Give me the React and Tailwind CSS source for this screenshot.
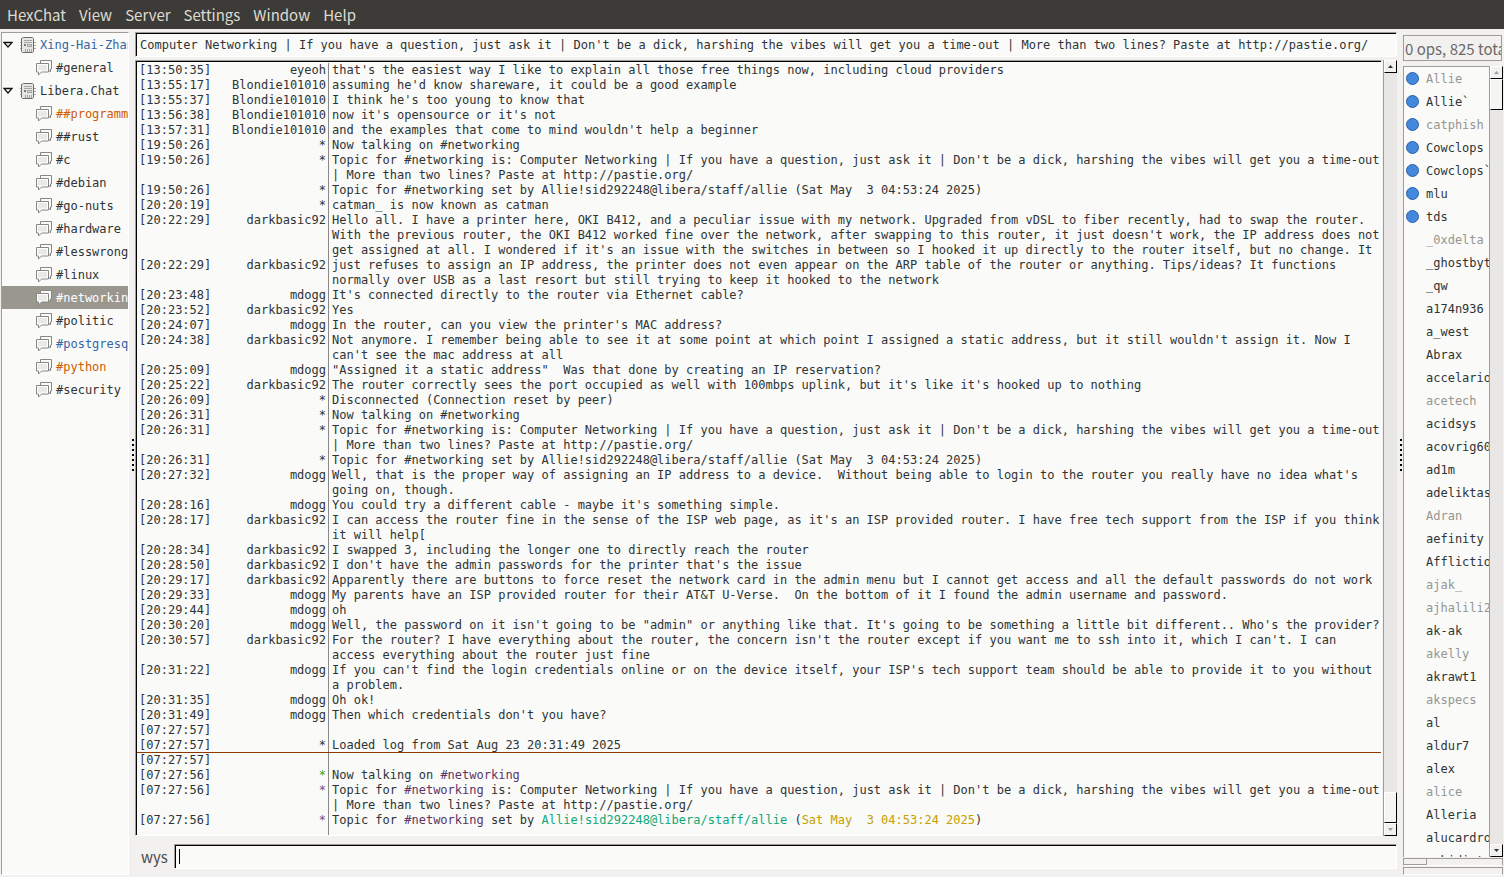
import clsx from "clsx";

const menus = ["HexChat", "View", "Server", "Settings", "Window", "Help"];

const networks = [
  { name: "Xing-Hai-Zhan", tone: "text-[#3465a4]", channels: [{ name: "#general" }] },
  {
    name: "Libera.Chat",
    channels: [
      { name: "##programming", tone: "text-[#ce5c00]" },
      { name: "##rust" },
      { name: "#c" },
      { name: "#debian" },
      { name: "#go-nuts" },
      { name: "#hardware" },
      { name: "#lesswrong" },
      { name: "#linux" },
      { name: "#networking", active: true },
      { name: "#politic" },
      { name: "#postgresql", tone: "text-[#3465a4]" },
      { name: "#python", tone: "text-[#ce5c00]" },
      { name: "#security" },
    ],
  },
];

const topic =
  "Computer Networking | If you have a question, just ask it | Don't be a dick, harshing the vibes will get you a time-out | More than two lines? Paste at http://pastie.org/";

const Chan = () => <span className="text-[#5c3566]">#networking</span>;

const log = [
  ["13:50:35", "eyeoh", "that's the easiest way I like to explain all those free things now, including cloud providers"],
  ["13:55:17", "Blondie101010", "assuming he'd know shareware, it could be a good example"],
  ["13:55:37", "Blondie101010", "I think he's too young to know that"],
  ["13:56:38", "Blondie101010", "now it's opensource or it's not"],
  ["13:57:31", "Blondie101010", "and the examples that come to mind wouldn't help a beginner"],
  ["19:50:26", "*", "Now talking on #networking"],
  ["19:50:26", "*", `Topic for #networking is: ${topic}`],
  ["19:50:26", "*", "Topic for #networking set by Allie!sid292248@libera/staff/allie (Sat May  3 04:53:24 2025)"],
  ["20:20:19", "*", "catman_ is now known as catman"],
  ["20:22:29", "darkbasic92", "Hello all. I have a printer here, OKI B412, and a peculiar issue with my network. Upgraded from vDSL to fiber recently, had to swap the router. With the previous router, the OKI B412 worked fine over the network, after swapping to this router, it just doesn't work, the IP address does not get assigned at all. I wondered if it's an issue with the switches in between so I hooked it up directly to the router itself, but no change. It"],
  ["20:22:29", "darkbasic92", "just refuses to assign an IP address, the printer does not even appear on the ARP table of the router or anything. Tips/ideas? It functions normally over USB as a last resort but still trying to keep it hooked to the network"],
  ["20:23:48", "mdogg", "It's connected directly to the router via Ethernet cable?"],
  ["20:23:52", "darkbasic92", "Yes"],
  ["20:24:07", "mdogg", "In the router, can you view the printer's MAC address?"],
  ["20:24:38", "darkbasic92", "Not anymore. I remember being able to see it at some point at which point I assigned a static address, but it still wouldn't assign it. Now I can't see the mac address at all"],
  ["20:25:09", "mdogg", "\"Assigned it a static address\"  Was that done by creating an IP reservation?"],
  ["20:25:22", "darkbasic92", "The router correctly sees the port occupied as well with 100mbps uplink, but it's like it's hooked up to nothing"],
  ["20:26:09", "*", "Disconnected (Connection reset by peer)"],
  ["20:26:31", "*", "Now talking on #networking"],
  ["20:26:31", "*", `Topic for #networking is: ${topic}`],
  ["20:26:31", "*", "Topic for #networking set by Allie!sid292248@libera/staff/allie (Sat May  3 04:53:24 2025)"],
  ["20:27:32", "mdogg", "Well, that is the proper way of assigning an IP address to a device.  Without being able to login to the router you really have no idea what's going on, though."],
  ["20:28:16", "mdogg", "You could try a different cable - maybe it's something simple."],
  ["20:28:17", "darkbasic92", "I can access the router fine in the sense of the ISP web page, as it's an ISP provided router. I have free tech support from the ISP if you think it will help["],
  ["20:28:34", "darkbasic92", "I swapped 3, including the longer one to directly reach the router"],
  ["20:28:50", "darkbasic92", "I don't have the admin passwords for the printer that's the issue"],
  ["20:29:17", "darkbasic92", "Apparently there are buttons to force reset the network card in the admin menu but I cannot get access and all the default passwords do not work"],
  ["20:29:33", "mdogg", "My parents have an ISP provided router for their AT&T U-Verse.  On the bottom of it I found the admin username and password."],
  ["20:29:44", "mdogg", "oh"],
  ["20:30:20", "mdogg", "Well, the password on it isn't going to be \"admin\" or anything like that. It's going to be something a little bit different.. Who's the provider?"],
  ["20:30:57", "darkbasic92", "For the router? I have everything about the router, the concern isn't the router except if you want me to ssh into it, which I can't. I can access everything about the router just fine"],
  ["20:31:22", "mdogg", "If you can't find the login credentials online or on the device itself, your ISP's tech support team should be able to provide it to you without a problem."],
  ["20:31:35", "mdogg", "Oh ok!"],
  ["20:31:49", "mdogg", "Then which credentials don't you have?"],
  ["07:27:57", "", ""],
  ["07:27:57", "*", "Loaded log from Sat Aug 23 20:31:49 2025", "marker"],
  ["07:27:57", "", ""],
  ["07:27:56", "*", <>Now talking on <Chan /></>, "text-[#4e9a06]"],
  ["07:27:56", "*", <>Topic for <Chan /> is: {topic}</>, "text-[#75507b]"],
  [
    "07:27:56",
    "*",
    <>
      Topic for <Chan /> set by <span className="text-[#11a879]">Allie!sid292248@libera/staff/allie</span> (
      <span className="text-[#c4a000]">Sat May  3 04:53:24 2025</span>)
    </>,
    "text-[#75507b]",
  ],
];

const users = [
  { name: "Allie", op: true, away: true },
  { name: "Allie`", op: true },
  { name: "catphish", op: true, away: true },
  { name: "Cowclops", op: true },
  { name: "Cowclops`", op: true },
  { name: "mlu", op: true },
  { name: "tds", op: true },
  { name: "_0xdelta", away: true },
  { name: "_ghostbyt" },
  { name: "_qw" },
  { name: "a174n936" },
  { name: "a_west" },
  { name: "Abrax" },
  { name: "accelario" },
  { name: "acetech", away: true },
  { name: "acidsys" },
  { name: "acovrig60" },
  { name: "ad1m" },
  { name: "adeliktas" },
  { name: "Adran", away: true },
  { name: "aefinity" },
  { name: "Afflictio" },
  { name: "ajak_", away: true },
  { name: "ajhalili2", away: true },
  { name: "ak-ak" },
  { name: "akelly", away: true },
  { name: "akrawt1" },
  { name: "akspecs", away: true },
  { name: "al" },
  { name: "aldur7" },
  { name: "alex" },
  { name: "alice", away: true },
  { name: "Alleria" },
  { name: "alucardro" },
  { name: "ambidistr" },
];

const ServerIcon = () => (
  <svg className="h-4 w-4 shrink-0" viewBox="0 0 16 16" fill="none">
    <path d="M0 5.5h2M0 8.5h2M0 11.5h2M14 5.5h2M14 8.5h2M14 11.5h2" stroke="#a9aaa7" />
    <path d="M3.500 0.500h9l1 1v13l-1 1h-10l-1-1v-13z" fill="#e6e6e4" stroke="#6b6d6b" />
    <path d="M4 3.500h8M4 5.500h8" stroke="#a5a7a2" />
    <rect x="4" y="7" width="2" height="2" fill="#777a75" />
    <rect x="7.500" y="7.500" width="4" height="2" fill="#d3d7cf" stroke="#a5a7a2" />
    <path d="M5.500 12v3M7.500 12v3M9.500 12v3M11.500 12v3" stroke="#a5a7a2" />
  </svg>
);

const ChannelIcon = () => (
  <svg className="h-4 w-4 shrink-0" viewBox="0 0 16 16">
    <path d="M4.500 0.500h11v8.500h-1v3l-2-2h-8z" fill="#fcfcfb" stroke="#868785" />
    <path d="M0.500 3.500h12v8.500h-7l-3 3v-3h-2z" fill="#fff" stroke="#868785" />
    <path d="M2 5h9v5.500h-9z" fill="#e9e9e8" />
  </svg>
);

const Expander = () => (
  <svg className="mr-[7px] h-2 w-[10px] shrink-0" viewBox="0 0 10 8">
    <path d="M1 1.500h8l-4 4.500z" fill="#fff" stroke="#111" strokeWidth="1.3" />
  </svg>
);

const Grip = () => (
  <div className="flex flex-1 flex-col items-center justify-center gap-[3px] pt-1">
    {Array.from({ length: 7 }, (_, i) => (
      <span key={i} className="h-[2px] w-[2px] bg-black" />
    ))}
  </div>
);

const ArrowButton = ({ down, disabled, label }) => (
  <button
    aria-label={label}
    className="flex h-[13px] shrink-0 items-center justify-center border border-t-white border-r-black border-b-black border-l-white bg-[#f2f1f0]"
  >
    <svg className={clsx("h-[3px] w-[5px]", down && "rotate-180")} viewBox="0 0 5 3">
      <path d="M0 3L2.500 0L5 3z" fill={disabled ? "#a09d99" : "#333"} />
    </svg>
  </button>
);

const Thumb = ({ className }) => (
  <div className={clsx("border border-t-white border-r-black border-b-black border-l-white bg-[#f6f5f4]", className)} />
);

const sunken =
  "border border-t-[#a09d99] border-r-white border-b-white border-l-[#a09d99] bg-[#fafaf8] shadow-[inset_1px_1px_0_#000]";
const mono = "font-['DejaVu_Sans_Mono',monospace] text-xs";

const App = () => {
  return (
    <div className="flex h-screen flex-col overflow-hidden bg-[#f2f1f0] font-['Noto_Sans_CJK_SC',sans-serif] text-[15px] text-[#4c4c4c]">
      {/* Menu bar */}
      <nav className="flex h-[29px] shrink-0 items-center gap-[13px] bg-[#3c3b37] px-[7px] pt-[2px] text-[#dfdbd2]">
        {menus.map((menu) => (
          <button key={menu}>{menu}</button>
        ))}
      </nav>

      <div className="flex min-h-0 flex-1">
        {/* Channel tree */}
        <aside
          className={clsx(
            "my-[2px] ml-px mt-[3px] w-[128px] shrink-0 overflow-hidden border border-t-[#a09d99] border-r-white border-b-white border-l-[#a09d99] bg-[#fafaf8] text-[#2e3436]",
            mono
          )}
        >
          {networks.map((network) => (
            <ul key={network.name}>
              <li className="flex h-[23px] items-center whitespace-nowrap pl-px">
                <Expander />
                <ServerIcon />
                <span className={clsx("ml-1", network.tone)}>{network.name}</span>
              </li>
              {network.channels.map((channel) => (
                <li
                  key={channel.name}
                  className={clsx(
                    "flex h-[23px] items-center whitespace-nowrap pl-[34px]",
                    channel.active ? "bg-[#9a978f] text-white" : channel.tone
                  )}
                >
                  <ChannelIcon />
                  <span className="ml-1">{channel.name}</span>
                </li>
              ))}
            </ul>
          ))}
        </aside>

        <div className="flex w-[6px] shrink-0 pl-[2px]">
          <Grip />
        </div>

        {/* Conversation */}
        <main className="flex min-w-0 flex-1 flex-col pb-2 pt-[3px]">
          <input
            aria-label="Topic"
            defaultValue={topic}
            className={clsx("h-[25px] shrink-0 px-1 text-[#2e3436] outline-none", sunken, mono)}
          />

          <div className="mt-[3px] flex min-h-0 flex-1 gap-px">
            <div
              role="log"
              className={clsx(
                "flex min-w-0 flex-1 flex-col overflow-hidden pl-px pt-[2px] text-[#2e3436]",
                sunken,
                mono
              )}
            >
              {log.map(([time, nick, text, tone], i) => (
                <div
                  key={i}
                  className={clsx(
                    "flex shrink-0 leading-[15px]",
                    tone === "marker" && "h-[15px] border-b border-b-[#8f3902]"
                  )}
                >
                  <time className="w-[90px] shrink-0 pl-[2px]">[{time}]</time>
                  <span
                    className={clsx("w-[102px] shrink-0 border-r border-[#8b8987] pr-[2px] text-right", tone)}
                  >
                    {nick}
                  </span>
                  <p className="min-w-0 flex-1 whitespace-pre-wrap pl-[3px]">{text}</p>
                </div>
              ))}
              <div className="w-48 flex-1 border-r border-[#8b8987]" />
            </div>
            <div className="flex w-[14px] shrink-0 flex-col border-l border-[#a09d99] bg-[#e8e7e5]">
              <ArrowButton label="Scroll up" />
              <div className="flex-1" />
              <Thumb className="h-[31px]" />
              <ArrowButton label="Scroll down" down disabled />
            </div>
          </div>

          <div className="mt-2 flex h-[25px] shrink-0 items-center">
            <label htmlFor="message" className="w-[39px] pl-[6px] pt-[2px]">
              wys
            </label>
            <div className={clsx("flex h-full min-w-0 flex-1 items-center pl-1", sunken)}>
              <span className="h-[15px] w-px bg-black" />
              <input id="message" className={clsx("min-w-0 flex-1 bg-transparent outline-none", mono)} />
            </div>
          </div>
        </main>

        <div className="flex w-[6px] shrink-0 pl-[2px]">
          <Grip />
        </div>

        {/* User list */}
        <aside className="flex w-[101px] shrink-0 flex-col pb-[2px] pr-px pt-[6px]">
          <div className="mr-px flex h-[26px] shrink-0 items-center overflow-hidden whitespace-nowrap border border-[#a09d99] pl-px pt-[2px] text-[#6b6966]">
            0 ops, 825 total
          </div>
          <div className="mt-[5px] flex min-h-0 flex-1">
            <ul className={clsx("min-w-0 flex-1 overflow-hidden border-l border-t border-[#a09d99] bg-[#fafaf8]", mono)}>
              {users.map((user) => (
                <li
                  key={user.name}
                  className={clsx(
                    "flex h-[23px] items-center whitespace-nowrap pl-[2px]",
                    user.away ? "text-[#959692]" : "text-[#2e3436]"
                  )}
                >
                  <span
                    className={clsx("mr-[7px] h-[13px] w-[13px] shrink-0 rounded-full", user.op && "border border-[#2d5fae] bg-[#4488dc]")}
                  />
                  {user.name}
                </li>
              ))}
            </ul>
            <div className="flex w-[14px] shrink-0 flex-col border-l border-[#a09d99] bg-[#e8e7e5]">
              <ArrowButton label="Scroll users up" disabled />
              <Thumb className="h-[31px]" />
              <div className="flex-1" />
              <ArrowButton label="Scroll users down" down />
            </div>
          </div>
          <div className="mt-px h-2 shrink-0 border border-[#a09d99] border-b-white">
            <div className="h-full w-[23px] border-b border-r border-[#a09d99]" />
          </div>
          <div className="mt-px h-2 shrink-0 border border-[#a09d99] border-b-white" />
        </aside>
      </div>
    </div>
  );
};

export default App;
